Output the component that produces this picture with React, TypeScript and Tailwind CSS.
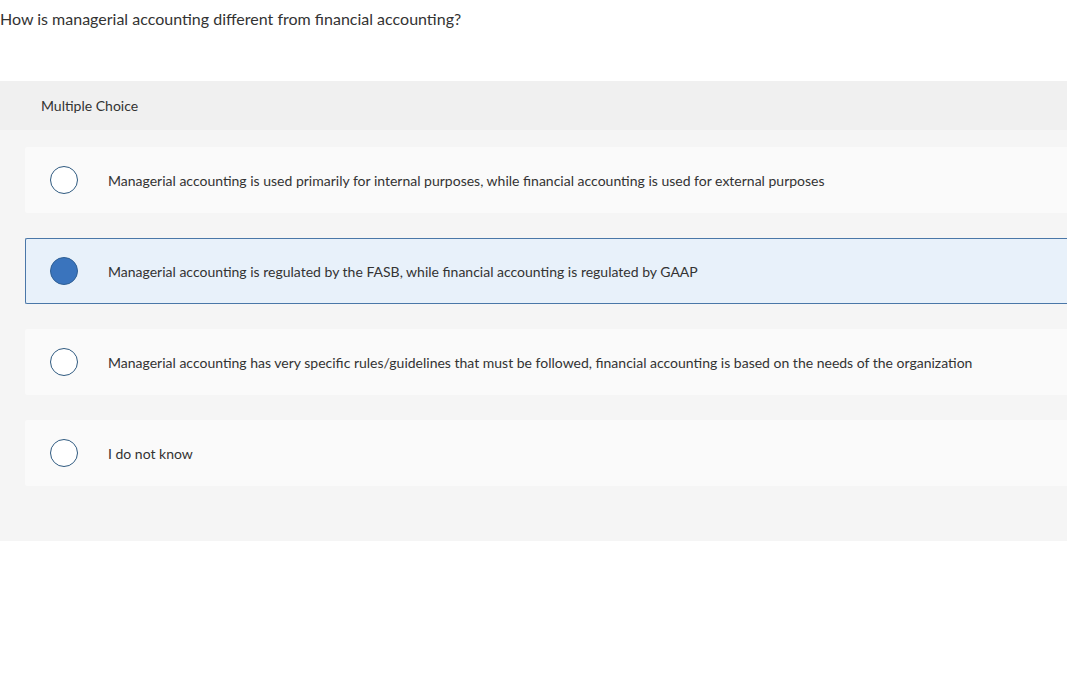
const options = [
  "Managerial accounting is used primarily for internal purposes, while financial accounting is used for external purposes",
  "Managerial accounting is regulated by the FASB, while financial accounting is regulated by GAAP",
  "Managerial accounting has very specific rules/guidelines that must be followed, financial accounting is based on the needs of the organization",
  "I do not know",
];

const selected = 1;

export default function App() {
  return (
    <div className="min-h-screen bg-white text-[#333] font-['Lato','Liberation_Sans',sans-serif]">
      <p className="pt-[9px] text-[16px] leading-[19px] text-[#333]">
        How is managerial accounting different from financial accounting?
      </p>

      <div className="mt-[53px]">
        <div className="h-[49px] bg-[#f0f0f0] pl-[41px] flex items-center text-[14px] text-[#333]">
          Multiple Choice
        </div>
        <div className="bg-[#f5f5f5] pl-[25px] pt-[17px] pb-[55px] flex flex-col gap-[25px]">
          {options.map((text, i) => {
            const active = i === selected;
            return (
              <div
                key={i}
                className={
                  active
                    ? "h-[66px] flex items-center gap-[30px] pl-[24px] rounded-l-[2px] border border-r-0 border-[#4a77a8] bg-[#e8f1fa]"
                    : "h-[66px] flex items-center gap-[30px] pl-[24px] rounded-l-[2px] border border-r-0 border-transparent bg-[#fafafa]"
                }
              >
                {active ? (
                  <span className="block shrink-0 w-[28px] h-[28px] rounded-full bg-[#3a74bd] border border-[#2f5f94]" />
                ) : (
                  <span className="block shrink-0 w-[28px] h-[28px] rounded-full bg-white border-[1.5px] border-[#2f5a80]" />
                )}
                <span className="text-[14px] text-[#333]">{text}</span>
              </div>
            );
          })}
        </div>
      </div>
    </div>
  );
}
